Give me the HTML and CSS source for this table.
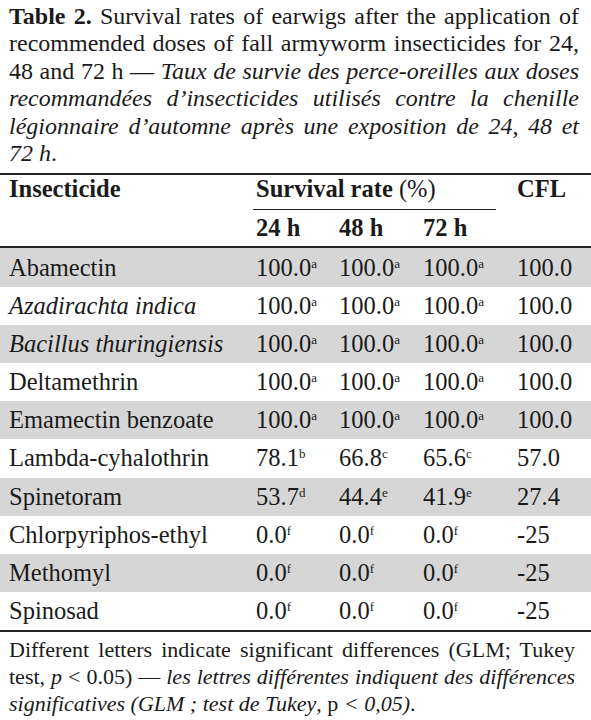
FILE: index.html
```html
<!doctype html>
<html lang="en">

<head>
    <meta charset="UTF-8" />
    <meta name="viewport" content="width=device-width, initial-scale=1.0" />
    <title>Table 2 - Survival rates of earwigs</title>
    <link rel="stylesheet" href="styles.css">
</head>

<body>
    <p class="caption">
        <b>Table 2.</b> Survival rates of earwigs after the application of recommended doses of fall armyworm
        insecticides for 24, 48 and 72 h — <i>Taux de survie des perce-oreilles aux doses recommandées
        d’insecticides utilisés contre la chenille légionnaire d’automne après une exposition de 24, 48 et
        72 h</i>.
    </p>

    <table class="data-table">
        <colgroup>
            <col class="col-name">
            <col class="col-24">
            <col class="col-48">
            <col class="col-72">
            <col class="col-cfl">
        </colgroup>
        <thead>
            <tr class="head-top">
                <th>Insecticide</th>
                <th colspan="3" class="group-cell">
                    <div class="group-title">Survival rate <span class="normal">(%)</span></div>
                </th>
                <th>CFL</th>
            </tr>
            <tr class="head-sub">
                <th></th>
                <th>24 h</th>
                <th>48 h</th>
                <th>72 h</th>
                <th></th>
            </tr>
        </thead>
        <tbody>
            <tr class="shaded">
                <td>Abamectin</td>
                <td>100.0<sup>a</sup></td>
                <td>100.0<sup>a</sup></td>
                <td>100.0<sup>a</sup></td>
                <td>100.0</td>
            </tr>
            <tr>
                <td><i>Azadirachta indica</i></td>
                <td>100.0<sup>a</sup></td>
                <td>100.0<sup>a</sup></td>
                <td>100.0<sup>a</sup></td>
                <td>100.0</td>
            </tr>
            <tr class="shaded">
                <td><i>Bacillus thuringiensis</i></td>
                <td>100.0<sup>a</sup></td>
                <td>100.0<sup>a</sup></td>
                <td>100.0<sup>a</sup></td>
                <td>100.0</td>
            </tr>
            <tr>
                <td>Deltamethrin</td>
                <td>100.0<sup>a</sup></td>
                <td>100.0<sup>a</sup></td>
                <td>100.0<sup>a</sup></td>
                <td>100.0</td>
            </tr>
            <tr class="shaded">
                <td>Emamectin benzoate</td>
                <td>100.0<sup>a</sup></td>
                <td>100.0<sup>a</sup></td>
                <td>100.0<sup>a</sup></td>
                <td>100.0</td>
            </tr>
            <tr>
                <td>Lambda-cyhalothrin</td>
                <td>78.1<sup>b</sup></td>
                <td>66.8<sup>c</sup></td>
                <td>65.6<sup>c</sup></td>
                <td>57.0</td>
            </tr>
            <tr class="shaded">
                <td>Spinetoram</td>
                <td>53.7<sup>d</sup></td>
                <td>44.4<sup>e</sup></td>
                <td>41.9<sup>e</sup></td>
                <td>27.4</td>
            </tr>
            <tr>
                <td>Chlorpyriphos-ethyl</td>
                <td>0.0<sup>f</sup></td>
                <td>0.0<sup>f</sup></td>
                <td>0.0<sup>f</sup></td>
                <td>-25</td>
            </tr>
            <tr class="shaded">
                <td>Methomyl</td>
                <td>0.0<sup>f</sup></td>
                <td>0.0<sup>f</sup></td>
                <td>0.0<sup>f</sup></td>
                <td>-25</td>
            </tr>
            <tr>
                <td>Spinosad</td>
                <td>0.0<sup>f</sup></td>
                <td>0.0<sup>f</sup></td>
                <td>0.0<sup>f</sup></td>
                <td>-25</td>
            </tr>
        </tbody>
    </table>

    <p class="footnote">
        Different letters indicate significant differences (GLM; Tukey test, <i>p</i> &lt; 0.05) —
        <i>les lettres différentes indiquent des différences significatives (GLM ; test de Tukey</i>, p
        <i>&lt; 0,05)</i>.
    </p>
</body>

</html>
```

FILE: styles.css
```css
body {
    font-family: "Liberation Serif", "Times New Roman", serif;
    margin: 0;
    padding: 0;
    background-color: #fff;
    color: #1a1a1a;
}

.caption {
    margin: 0;
    padding: 3px 12px 0 9px;
    font-size: 24px;
    line-height: 27.4px;
    text-align: justify;
}

.caption b {
    font-weight: bold;
}

.data-table {
    width: 100%;
    margin-top: 6px;
    border-collapse: collapse;
    table-layout: fixed;
    font-size: 24.5px;
    border-top: 2px solid #222;
    border-bottom: 2px solid #222;
}

.col-name {
    width: 248px;
}

.col-24 {
    width: 83px;
}

.col-48 {
    width: 84px;
}

.col-72 {
    width: 94px;
}

.col-cfl {
    width: 82px;
}

.data-table th,
.data-table td {
    padding: 0 0 0 8px;
    text-align: left;
    white-space: nowrap;
    vertical-align: middle;
}

.data-table th:first-child,
.data-table td:first-child {
    padding-left: 9px;
}

.data-table th {
    font-weight: bold;
    line-height: 28px;
}

.head-top th {
    vertical-align: baseline;
}

.head-sub th {
    height: 36px;
}

.head-sub {
    border-bottom: 2px solid #222;
}

.data-table .group-cell {
    padding: 0 13px 0 5px;
}

.group-title {
    padding: 0 0 6px 3px;
    border-bottom: 1px solid #222;
}

.normal {
    font-weight: normal;
}

.data-table td {
    height: 38.2px;
}

.shaded {
    background-color: #d6d6d6;
}

sup {
    font-size: 13px;
    line-height: 0;
    vertical-align: 8px;
}

.footnote {
    margin: 0;
    padding: 4px 16px 0 9px;
    font-size: 22px;
    line-height: 27px;
    text-align: justify;
}
```
